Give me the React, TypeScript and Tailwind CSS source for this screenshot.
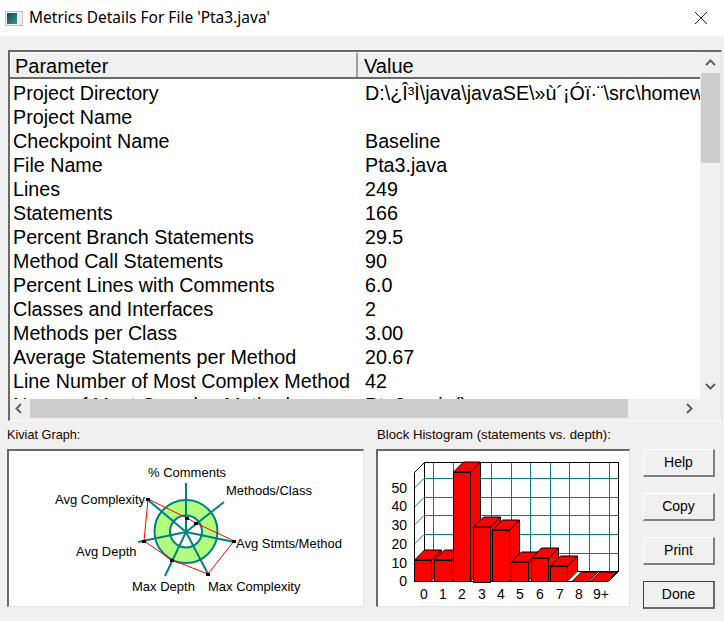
import React from "react";

const rows = [
  ["Project Directory", "D:\\¿Î³Ì\\java\\javaSE\\»ù´¡Óï·¨\\src\\homework\\Pta3"],
  ["Project Name", ""],
  ["Checkpoint Name", "Baseline"],
  ["File Name", "Pta3.java"],
  ["Lines", "249"],
  ["Statements", "166"],
  ["Percent Branch Statements", "29.5"],
  ["Method Call Statements", "90"],
  ["Percent Lines with Comments", "6.0"],
  ["Classes and Interfaces", "2"],
  ["Methods per Class", "3.00"],
  ["Average Statements per Method", "20.67"],
  ["Line Number of Most Complex Method", "42"],
  ["Name of Most Complex Method", "Pta3.main()"],
];

const spokes = [
  [186, 483],
  [224, 502],
  [234, 542],
  [208, 574],
  [165, 576],
  [138, 542],
  [148, 500],
];

const redPoints = [
  [187, 518],
  [196, 523],
  [234, 541],
  [208, 574],
  [172, 560],
  [144, 541],
  [148, 499],
];

const kiviatLabels = [
  { t: "% Comments", x: 148, y: 477 },
  { t: "Methods/Class", x: 226, y: 495 },
  { t: "Avg Complexity", x: 55, y: 504 },
  { t: "Avg Stmts/Method", x: 236, y: 548 },
  { t: "Avg Depth", x: 76, y: 556 },
  { t: "Max Depth", x: 132, y: 591 },
  { t: "Max Complexity", x: 208, y: 591 },
];

const bars = [
  { x: 414.5, w: 17, top: 560 },
  { x: 434.5, w: 17, top: 560 },
  { x: 453.5, w: 17, top: 472 },
  { x: 473.5, w: 17, top: 527, bottom: 582 },
  { x: 492.5, w: 17, top: 530 },
  { x: 511.5, w: 17, top: 562 },
  { x: 531.5, w: 17, top: 558 },
  { x: 550.5, w: 17, top: 566 },
];

const Kiviat = () => (
  <svg width={353} height={155} viewBox="9 451 353 155" className="block">
    <circle cx={186} cy={531.5} r={24} fill="none" stroke="#b2ff80" strokeWidth={15} />
    <circle cx={186} cy={531.5} r={31.5} fill="none" stroke="#008080" strokeWidth={2} />
    <circle cx={186} cy={531.5} r={16} fill="none" stroke="#008080" strokeWidth={2} />
    {spokes.map(([x, y], i) => (
      <line key={i} x1={186} y1={532} x2={x} y2={y} stroke="#008080" strokeWidth={2} />
    ))}
    <polygon
      points={redPoints.map((p) => p.join(",")).join(" ")}
      fill="none"
      stroke="#ff0000"
      strokeWidth={1}
    />
    {redPoints.map(([x, y], i) => (
      <rect key={i} x={x - 2} y={y - 1} width={4} height={3} fill="#000000" />
    ))}
    {kiviatLabels.map((l) => (
      <text key={l.t} x={l.x} y={l.y} fontSize={13} fill="#000000" fontFamily="'Liberation Sans', sans-serif">
        {l.t}
      </text>
    ))}
  </svg>
);

const Histogram = () => (
  <svg width={250} height={155} viewBox="378 451 250 155" className="block">
    {[433, 453, 472, 491, 511, 530, 550, 569, 589, 609].map((x) => (
      <line key={x} x1={x + 0.5} y1={462} x2={x + 0.5} y2={571} stroke="#008080" />
    ))}
    {[478, 497, 515, 534, 553].map((y) => (
      <g key={y}>
        <line x1={424} y1={y + 0.5} x2={618} y2={y + 0.5} stroke="#008080" />
        <line x1={414} y1={y + 10.5} x2={424} y2={y + 0.5} stroke="#008080" />
      </g>
    ))}
    <path d="M414.5 581.5V472.5L424.5 462.5H618.5V571.5H424.5V462.5M424.5 571.5L414.5 581.5H608.5L618.5 571.5" fill="none" stroke="#000000" />
    <path d="M572 581.5L581.5 572H598L588 581.5Z" fill="#ff0000" stroke="#000000" />
    <path d="M590 581.5L600 572H617L607 581.5Z" fill="#ff0000" stroke="#000000" />
    {bars.map((b, i) => {
      const bottom = b.bottom ?? 581;
      const r = b.x + b.w;
      return (
        <g key={i} fill="#ff0000" stroke="#000000">
          <path d={`M${b.x} ${b.top}L${b.x + 10} ${b.top - 10}H${r + 10}V${bottom - 10}L${r} ${bottom}V${b.top}Z`} />
          <path d={`M${r} ${b.top}L${r + 10} ${b.top - 10}`} />
          <rect x={b.x} y={b.top + 0.5} width={b.w} height={bottom - b.top} />
        </g>
      );
    })}
    {[
      ["50", 488],
      ["40", 506],
      ["30", 525],
      ["20", 544],
      ["10", 563],
      ["0", 581],
    ].map(([t, y]) => (
      <text key={t} x={407} y={Number(y) + 5} textAnchor="end" fontSize={14} fill="#000000" fontFamily="'Liberation Sans', sans-serif">
        {t}
      </text>
    ))}
    {[
      ["0", 424],
      ["1", 443],
      ["2", 462],
      ["3", 482],
      ["4", 501],
      ["5", 520],
      ["6", 540],
      ["7", 560],
      ["8", 579],
      ["9+", 601],
    ].map(([t, x]) => (
      <text key={t} x={Number(x)} y={599} textAnchor="middle" fontSize={14} fill="#000000" fontFamily="'Liberation Sans', sans-serif">
        {t}
      </text>
    ))}
  </svg>
);

const DialogButton = ({ label, primary }: { label: string; primary?: boolean }) => (
  <button
    className={
      primary
        ? "w-[72px] h-[28px] bg-[#f0f0f0] text-[14px] text-black border border-[#404040] border-r-2 border-b-2 border-r-[#696969] border-b-[#696969]"
        : "w-[72px] h-[28px] bg-[#f0f0f0] text-[14px] text-black border border-white border-r-2 border-b-2 border-r-[#808080] border-b-[#808080]"
    }
  >
    {label}
  </button>
);

const App = () => {
  return (
    <div className="w-[724px] h-[621px] overflow-hidden bg-[#f0f0f0] font-['Liberation_Sans',sans-serif] text-black">
      <div className="h-[36px] bg-white flex items-center">
        <div className="ml-[5px] w-[18px] h-[15px] border border-[#c4c4c4] bg-[#eeeeee] flex">
          <div className="ml-px mt-px w-[10px] h-[11px] bg-gradient-to-br from-[#204060] to-[#30a080]" />
        </div>
        <span className="ml-[6px] text-[15.5px] font-['Noto_Sans',sans-serif]">Metrics Details For File 'Pta3.java'</span>
        <svg className="ml-auto mr-[16px]" width={14} height={14} viewBox="0 0 14 14">
          <path d="M1 1l12 12M13 1L1 13" stroke="#202020" strokeWidth={1} fill="none" />
        </svg>
      </div>

      <div className="ml-[8px] mt-[14px] w-[714px] h-[371px] border-t-2 border-l-2 border-[#696969] border-r border-b border-r-[#e3e3e3] border-b-[#fafafa] flex flex-col">
        <div className="flex flex-1 min-h-0">
          <div className="flex-1 min-w-0 flex flex-col bg-white">
            <div className="h-[27px] shrink-0 flex bg-[#f0f0f0] border-b-2 border-[#696969] text-[20px] leading-[26px]">
              <div className="w-[348px] pl-[4px] border-t border-l border-white border-r-2 border-r-[#a0a0a0]">Parameter</div>
              <div className="flex-1 pl-[6px] border-t border-white">Value</div>
            </div>
            <div className="flex-1 overflow-hidden pt-[2px] text-[19.7px] leading-[24px]">
              {rows.map(([name, value]) => (
                <div key={name} className="flex h-[24px] whitespace-nowrap">
                  <div className="w-[355px] shrink-0 pl-[3px]">{name}</div>
                  <div className="flex-1 min-w-0 overflow-hidden">{value}</div>
                </div>
              ))}
            </div>
          </div>
          <div className="w-[21px] shrink-0 flex flex-col bg-[#f0f0f0]">
            <div className="h-[21px] flex items-center justify-center">
              <svg width={11} height={7} viewBox="0 0 11 7">
                <path d="M1 6l4.5-4.5L10 6" stroke="#606060" strokeWidth={2} fill="none" />
              </svg>
            </div>
            <div className="h-[90px] mx-px bg-[#cdcdcd]" />
            <div className="flex-1" />
            <div className="h-[21px] mb-[2px] flex items-center justify-center">
              <svg width={11} height={7} viewBox="0 0 11 7">
                <path d="M1 1l4.5 4.5L10 1" stroke="#606060" strokeWidth={2} fill="none" />
              </svg>
            </div>
          </div>
        </div>
        <div className="h-[21px] shrink-0 flex items-start bg-[#f0f0f0]">
          <div className="w-[17px] h-[19px] mr-[3px] flex items-center justify-center">
            <svg width={7} height={11} viewBox="0 0 7 11">
              <path d="M6 1L1.5 5.5L6 10" stroke="#606060" strokeWidth={2} fill="none" />
            </svg>
          </div>
          <div className="w-[598px] h-[19px] bg-[#cdcdcd]" />
          <div className="flex-1" />
          <div className="w-[20px] h-[19px] mr-[22px] flex items-center justify-center">
            <svg width={7} height={11} viewBox="0 0 7 11">
              <path d="M1 1l4.5 4.5L1 10" stroke="#606060" strokeWidth={2} fill="none" />
            </svg>
          </div>
        </div>
      </div>

      <div className="ml-[7px] mt-[7px] flex">
        <div className="w-[357px]">
          <div className="text-[12.7px] leading-[14px] h-[21px] text-[#200000]">Kiviat Graph:</div>
          <div className="h-[158px] bg-white border-t-2 border-l-2 border-[#696969] border-r border-b border-r-[#e3e3e3] border-b-[#e3e3e3]">
            <Kiviat />
          </div>
        </div>
        <div className="ml-[12px] w-[254px]">
          <div className="ml-px text-[13.2px] leading-[14px] h-[21px] text-[#200000]">Block Histogram (statements vs. depth):</div>
          <div className="h-[158px] bg-white border-t-2 border-l-2 border-[#696969] border-r border-b border-r-[#e3e3e3] border-b-[#e3e3e3]">
            <Histogram />
          </div>
        </div>
        <div className="ml-[13px] mt-[21px] flex flex-col gap-[16px]">
          <DialogButton label="Help" />
          <DialogButton label="Copy" />
          <DialogButton label="Print" />
          <DialogButton label="Done" primary />
        </div>
      </div>
    </div>
  );
};

export default App;
